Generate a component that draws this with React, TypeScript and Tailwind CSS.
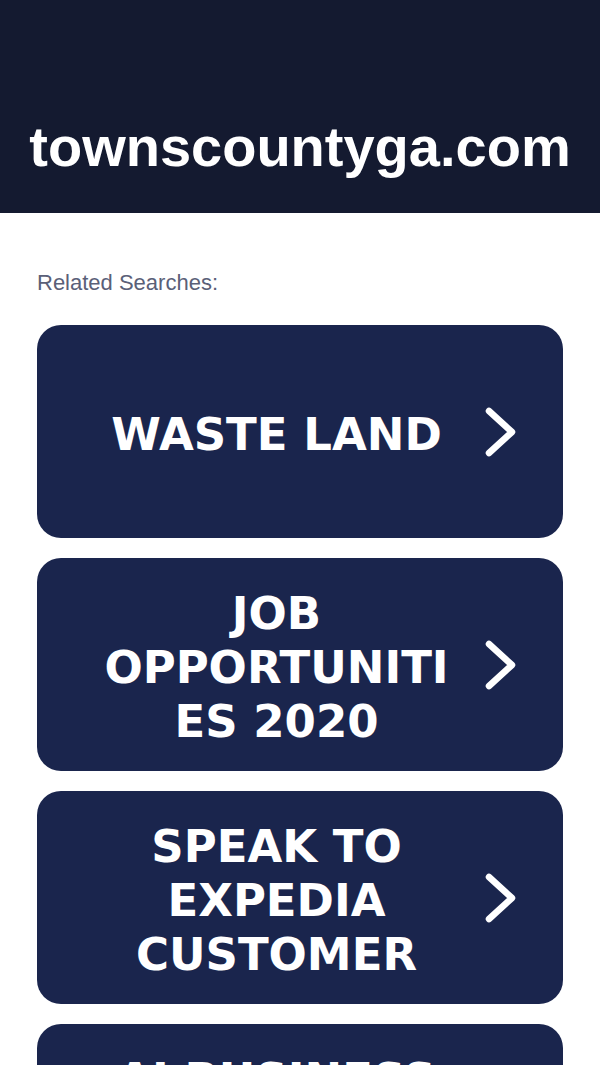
import React from "react";

const items = ["Waste Land", "Job Opportunities 2020", "Speak to Expedia Customer", "AI Business Ideas For Beginners"];

function Chevron() {
  return (
    <svg width="36" height="54" viewBox="0 0 36 54" fill="none">
      <path d="M7 6 L30 27 L7 48" stroke="white" strokeWidth="6.5" strokeLinecap="round" strokeLinejoin="round" />
    </svg>
  );
}

export default function App() {
  return (
    <div className="h-[1065px] overflow-hidden bg-white">
      <header className="h-[213px] bg-[#141a30] flex items-end justify-center pb-[38px]">
        <h1 className="text-white text-[56px] font-bold leading-none" style={{ fontFamily: '"Liberation Sans", Arial, sans-serif' }}>
          townscountyga.com
        </h1>
      </header>
      <main className="px-[37px] pt-[56px]">
        <p className="text-[#5a6078] text-[22px] leading-[28px] mb-[28px]" style={{ fontFamily: '"Liberation Sans", Arial, sans-serif' }}>
          Related Searches:
        </p>
        <div className="flex flex-col gap-[20px]">
          {items.map((t) => (
            <div key={t} className="h-[213px] shrink-0 rounded-[24px] bg-[#1a254d] flex items-center px-[40px]">
              <div
                className="flex-1 min-w-0 px-[20px] pt-[6px] text-center text-white uppercase font-bold text-[45px] leading-[54px] [overflow-wrap:anywhere]"
                style={{ fontFamily: '"DejaVu Sans", Verdana, sans-serif' }}
              >
                {t}
              </div>
              <div className="w-[47px] flex justify-center">
                <Chevron />
              </div>
            </div>
          ))}
        </div>
      </main>
    </div>
  );
}
